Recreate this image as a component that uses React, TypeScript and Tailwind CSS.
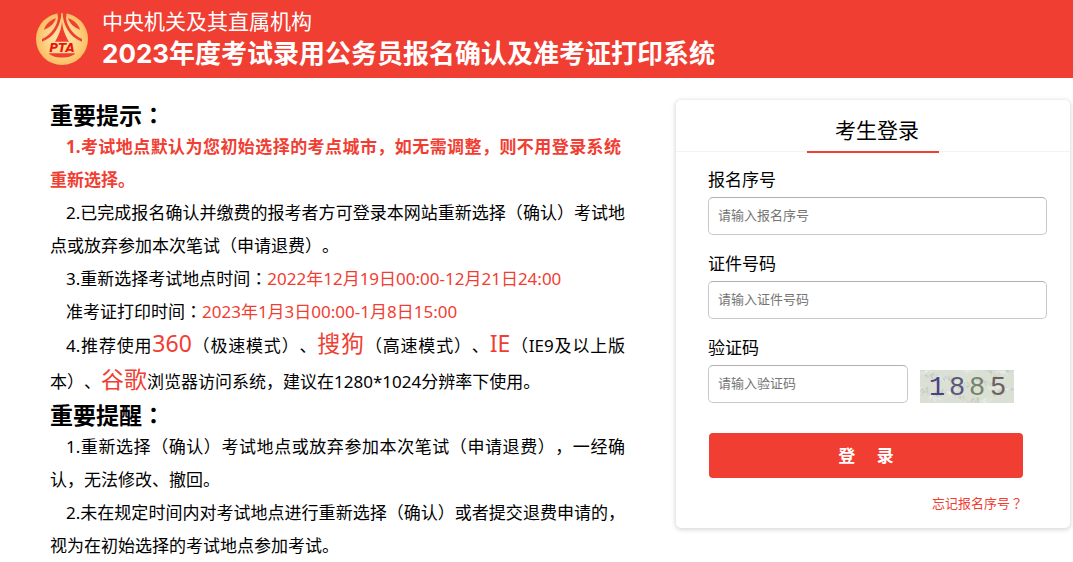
import { useState } from "react";
import type { ReactNode } from "react";

const NOISE = Array.from({ length: 260 }, (_, i) => ({
  x: (i * 37 + ((i * i) % 5)) % 94,
  y: (i * 23 + ((i * i) % 11)) % 33,
  dx: 1 + (i % 3),
  dy: ((i * 5) % 7) - 3,
  cor: ["#c6d0b6", "#cdd3e2", "#e8ecdf", "#dcd2d2", "#c4cfb9", "#dde5ea"][(i * 7) % 6],
}));

const DIGITS = [
  { d: "1", x: 9, color: "#4c4084" },
  { d: "8", x: 29, color: "#5a577a" },
  { d: "8", x: 49, color: "#76836c" },
  { d: "5", x: 70, color: "#6e6062" },
];

// full-width colons and question marks sit in the middle of their cell
function Zh({ children }: { children: string }) {
  return (
    <>
      {children.split(/([：？])/).map((s, i) =>
        s === "：" || s === "？" ? <span key={i} className="font-['Noto_Sans_CJK_TC',sans-serif]">{s}</span> : s
      )}
    </>
  );
}

function Logo() {
  return (
    <svg viewBox="0 0 156 156" className="size-[52px] shrink-0" aria-label="PTA">
      <defs>
        <radialGradient id="ouro">
          <stop offset="0" stopColor="#ffe9b0" />
          <stop offset="0.6" stopColor="#fdd488" />
          <stop offset="1" stopColor="#fbbd62" />
        </radialGradient>
      </defs>
      <circle cx="78" cy="78" r="78" fill="url(#ouro)" />
      <g fill="#f03e33">
        <path d="M64 0 H76 C75 36 56 72 18 86 L18 78 C50 62 64 34 66 14 Z" />
        <path d="M92 0 H80 C81 36 100 72 138 86 L138 78 C106 62 92 34 90 14 Z" />
        <path d="M60 16 C40 22 28 36 24 50 C42 44 54 32 60 16 Z" />
        <path d="M96 16 C116 22 128 36 132 50 C114 44 102 32 96 16 Z" />
        <path d="M78 24 C80 50 88 68 99 86 H57 C68 68 76 50 78 24 Z" />
        <path d="M38 121 H118 C106 138 50 138 38 121 Z" />
      </g>
      <text x="78" y="116" textAnchor="middle" fontSize="36" fill="#e8150f" className="font-['DejaVu_Sans',sans-serif] font-bold italic">PTA</text>
    </svg>
  );
}

function Captcha() {
  return (
    <svg viewBox="0 0 94 33" className="h-[33px] w-[94px] shrink-0" role="img" aria-label="1885">
      <rect width="94" height="33" fill="#dae0d3" />
      {NOISE.map((n, i) => <path key={i} d={`M${n.x} ${n.y}l${n.dx} ${n.dy}`} stroke={n.cor} strokeWidth="1.5" />)}
      {DIGITS.map((n, i) => (
        <text key={i} x={n.x} y="25" fontSize="27" fill={n.color} className="font-['Liberation_Mono',monospace]">{n.d}</text>
      ))}
    </svg>
  );
}

function Big({ children }: { children: ReactNode }) {
  return <span className="text-[23px] leading-none text-[#f03e33]">{children}</span>;
}

const inputClass = "h-[38px] rounded-[5px] border border-[#c8c8c8] border-t-[#b0b0b0] bg-white px-[9px] pb-[3px] text-[13px] outline-none placeholder:text-[#757575]";

export default function App() {
  const [form, setForm] = useState({ numero: "", documento: "", codigo: "" });

  return (
    <div className="min-h-screen bg-white font-['Noto_Sans','Noto_Sans_CJK_SC',sans-serif] text-[17px] text-black [text-spacing-trim:space-all]">
      <header className="flex h-[78px] items-center gap-[14px] bg-[#f03e33] px-9 text-white">
        <Logo />
        <h1 className="font-['Inter','Noto_Sans_CJK_SC',sans-serif]">
          <span className="block text-[21px] leading-[30px]">中央机关及其直属机构</span>
          <span className="block text-[26px] leading-[34px] font-bold">2023年度考试录用公务员报名确认及准考证打印系统</span>
        </h1>
      </header>

      <main className="flex items-start gap-[51px] pt-[22px] pr-[3px] pl-[50px]">
        <section className="min-w-0 flex-1 text-justify leading-[33px]">
          <h2 className="text-[23px] leading-[29px] font-bold"><Zh>重要提示：</Zh></h2>
          <p className="pr-1 indent-4 font-bold text-[#f03e33]"><Zh>1.考试地点默认为您初始选择的考点城市，如无需调整，则不用登录系统重新选择。</Zh></p>
          <p className="indent-4">2.已完成报名确认并缴费的报考者方可登录本网站重新选择（确认）考试地点或放弃参加本次笔试（申请退费）。</p>
          <p className="indent-4 leading-8"><Zh>3.重新选择考试地点时间：</Zh><span className="text-[#f03e33]">2022年12月19日00:00-12月21日24:00</span></p>
          <p className="indent-4 leading-8"><Zh>准考证打印时间：</Zh><span className="text-[#f03e33]">2023年1月3日00:00-1月8日15:00</span></p>
          <p className="indent-4 leading-[36px]">
            4.推荐使用<Big>360</Big>（极速模式）、<Big>搜狗</Big>（高速模式）、<Big>IE</Big>（IE9及以上版本）、<Big>谷歌</Big><Zh>浏览器访问系统，建议在1280*1024分辨率下使用。</Zh>
          </p>
          <h2 className="text-[23px] leading-[29px] font-bold"><Zh>重要提醒：</Zh></h2>
          <p className="indent-4"><Zh>1.重新选择（确认）考试地点或放弃参加本次笔试（申请退费），一经确认，无法修改、撤回。</Zh></p>
          <p className="indent-4"><Zh>2.未在规定时间内对考试地点进行重新选择（确认）或者提交退费申请的，视为在初始选择的考试地点参加考试。</Zh></p>
        </section>

        <form onSubmit={(e) => e.preventDefault()} className="w-[394px] shrink-0 rounded-[5px] bg-white pb-[15px] shadow-[0_1px_4px_1px_rgba(0,0,0,0.15)]">
          <div className="flex h-[52px] justify-center border-b border-[#f3f3f3]">
            <h2 className="h-[53px] w-1/3 border-b-2 border-[#f03e33] pl-2 text-center text-[21px] leading-[60px]">考生登录</h2>
          </div>
          <div className="flex flex-col gap-[15px] pt-[14px] pr-[23px] pl-8">
            <div className="flex flex-col gap-[3px]">
              <label htmlFor="numero" className="leading-7">报名序号</label>
              <input id="numero" placeholder="请输入报名序号" value={form.numero} onChange={(e) => setForm({ ...form, numero: e.target.value })} className={inputClass} />
            </div>
            <div className="flex flex-col gap-[3px]">
              <label htmlFor="documento" className="leading-7">证件号码</label>
              <input id="documento" placeholder="请输入证件号码" value={form.documento} onChange={(e) => setForm({ ...form, documento: e.target.value })} className={inputClass} />
            </div>
            <div className="flex flex-col gap-[3px]">
              <label htmlFor="codigo" className="leading-7">验证码</label>
              <div className="flex items-end gap-3">
                <input id="codigo" placeholder="请输入验证码" value={form.codigo} onChange={(e) => setForm({ ...form, codigo: e.target.value })} className={`${inputClass} w-[200px]`} />
                <Captcha />
              </div>
            </div>
          </div>
          <div className="flex flex-col gap-[15px] pt-[30px] pr-[47px] pl-[33px]">
            <button type="submit" className="h-[45px] rounded-[4px] bg-[#f03e33] font-bold text-white">登&emsp;&nbsp;录</button>
            <a href="#" className="self-end text-[13px] leading-5 text-[#f03e33]"><Zh>忘记报名序号？</Zh></a>
          </div>
        </form>
      </main>
    </div>
  );
}
